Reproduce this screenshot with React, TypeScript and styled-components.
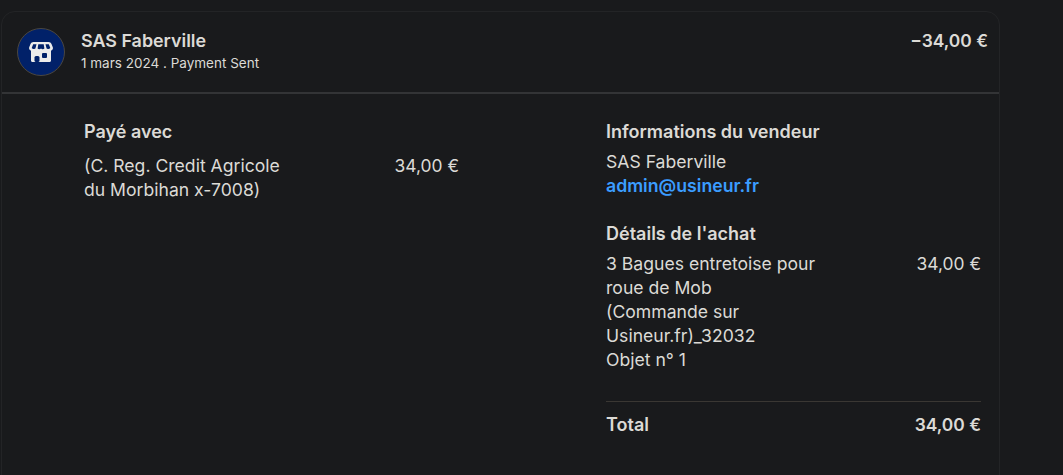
import styled, { createGlobalStyle } from 'styled-components';

const GlobalStyle = createGlobalStyle`
  html, body {
    margin: 0;
    background: #191a1c;
  }
  body {
    font-family: Inter, "Liberation Sans", sans-serif;
    color: #dcdad6;
    overflow: hidden;
  }
`;

const Page = styled.div`
  width: 1063px;
  height: 475px;
  padding: 11px 0 0 1px;
  box-sizing: border-box;
  overflow: hidden;
`;

const Card = styled.div`
  width: 999px;
  height: 500px;
  box-sizing: border-box;
  border: 1px solid #232426;
  border-radius: 14px;
`;

const Header = styled.div`
  display: flex;
  justify-content: space-between;
  height: 82px;
  box-sizing: border-box;
  padding: 16px 11px 0 15px;
  border-bottom: 2px solid #333436;
`;

const Merchant = styled.div`
  display: flex;
  gap: 16px;
`;

const Avatar = styled.div`
  width: 48px;
  height: 48px;
  box-sizing: border-box;
  border-radius: 50%;
  border: 1px solid #4a4640;
  background: #012169;
  display: flex;
  align-items: center;
  justify-content: center;
`;

const MerchantText = styled.div`
  padding-top: 2px;
`;

const MerchantName = styled.div`
  font-size: 17.9px;
  line-height: 22px;
  font-weight: 600;
`;

const MerchantSub = styled.div`
  font-size: 13.5px;
  line-height: 20px;
  margin-top: 1px;
`;

const HeaderAmount = styled.div`
  font-size: 17.4px;
  line-height: 22px;
  font-weight: 600;
  padding-top: 2px;
`;

const Body = styled.div`
  display: grid;
  grid-template-columns: 375px 375px;
  column-gap: 147px;
  padding: 26px 17px 0 82px;
`;

const Column = styled.div`
  display: flex;
  flex-direction: column;
`;

const Heading = styled.div`
  font-size: 18px;
  line-height: 24px;
  font-weight: 600;
`;

const Amount = styled.div<{ $strong?: boolean }>`
  font-size: 17.4px;
  line-height: 24px;
  font-weight: ${(p) => (p.$strong ? 600 : 400)};
`;

const Row = styled.div<{ $top?: number }>`
  display: flex;
  justify-content: space-between;
  align-items: flex-start;
  margin-top: ${(p) => p.$top ?? 0}px;
`;

const Text = styled.div<{ $width?: number }>`
  font-size: 17.6px;
  line-height: 24px;
  ${(p) => (p.$width ? `width: ${p.$width}px;` : '')}
`;

const SellerName = styled(Text)`
  margin-top: 6px;
`;

const Email = styled.a`
  font-size: 17.7px;
  line-height: 24px;
  font-weight: 600;
  color: #3b9dff;
  text-decoration: none;
`;

const Section = styled.div`
  margin-top: 24px;
`;

const Divider = styled.div`
  height: 1px;
  background: #3a3733;
  margin-top: 29px;
`;

function StoreIcon() {
  return (
    <svg width="24" height="20" viewBox="0 0 24 20" fill="none">
      <path
        d="M4.500 0h15c1.400 0 2.500.8 3 2l1.300 3.200c.6 1.700-.6 3.200-1.800 3.500V18.500c0 .9-.6 1.500-1.500 1.500h-17C2.600 20 2 19.400 2 18.500V8.700C.8 8.400-.4 6.900.2 5.200L1.500 2c.5-1.200 1.600-2 3-2z"
        fill="#ececeb"
      />
      <path
        d="M4.200 2.300h3.300L6.400 6.500c-.4.700-2.700.7-3.700-.5zM16.500 2.300h3.300l1.500 3.700c-1 1.200-3.300 1.200-3.700.5zM9.300 2.300h5.400l.7 4.100c-.7 1-2.600 1-3.400.1-.8.900-2.700.9-3.400-.1z"
        fill="#012169"
      />
      <rect x="5.500" y="14" width="5" height="6" rx="1.500" fill="#012169" />
      <rect x="13" y="11" width="5" height="5" rx="1" fill="#012169" />
    </svg>
  );
}

export default function App() {
  return (
    <>
      <GlobalStyle />
      <Page>
        <Card>
          <Header>
            <Merchant>
              <Avatar>
                <StoreIcon />
              </Avatar>
              <MerchantText>
                <MerchantName>SAS Faberville</MerchantName>
                <MerchantSub>1 mars 2024 . Payment Sent</MerchantSub>
              </MerchantText>
            </Merchant>
            <HeaderAmount>−34,00 €</HeaderAmount>
          </Header>
          <Body>
            <Column>
              <Heading>Payé avec</Heading>
              <Row $top={10}>
                <Text $width={215}>(C. Reg. Credit Agricole du Morbihan x-7008)</Text>
                <Amount>34,00 €</Amount>
              </Row>
            </Column>
            <Column>
              <Heading>Informations du vendeur</Heading>
              <SellerName>SAS Faberville</SellerName>
              <Email>admin@usineur.fr</Email>
              <Section>
                <Heading>Détails de l'achat</Heading>
                <Row $top={6}>
                  <Text $width={210}>
                    3 Bagues entretoise pour roue de Mob (Commande sur Usineur.fr)_32032
                    <br />
                    Objet n° 1
                  </Text>
                  <Amount>34,00 €</Amount>
                </Row>
              </Section>
              <Divider />
              <Row $top={11}>
                <Heading>Total</Heading>
                <Amount $strong>34,00 €</Amount>
              </Row>
            </Column>
          </Body>
        </Card>
      </Page>
    </>
  );
}
